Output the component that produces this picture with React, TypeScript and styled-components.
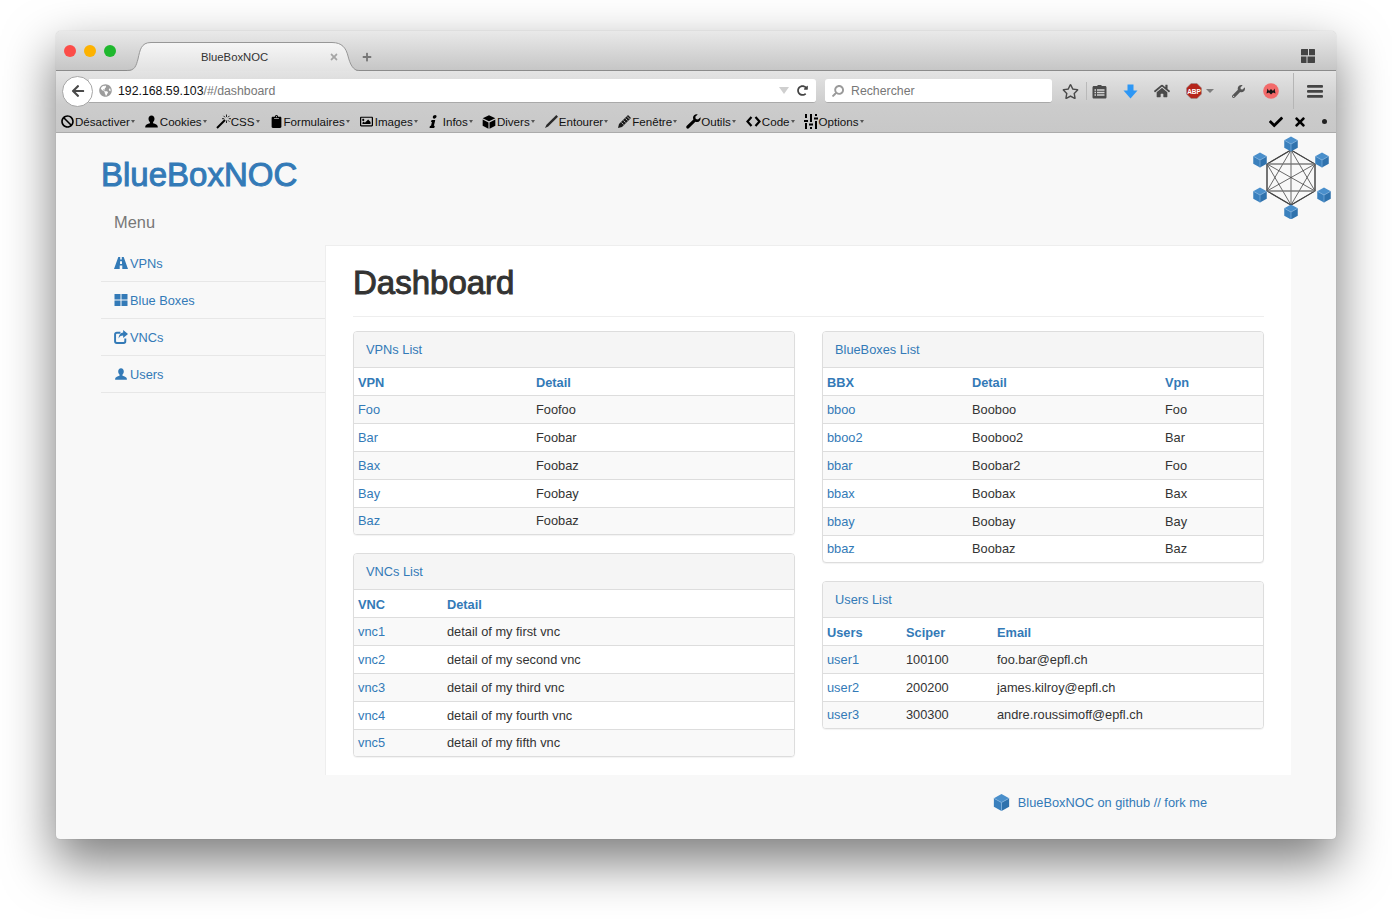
import React from 'react';
import styled, { createGlobalStyle } from 'styled-components';
import {
  FaBan,
  FaClipboard,
  FaHome,
  FaInfo,
  FaRedoAlt,
  FaRegImage,
  FaRegStar,
  FaSearch,
  FaWrench,
  FaArrowLeft,
  FaGlobeAmericas,
  FaCheck,
  FaTimes,
  FaPlus,
} from 'react-icons/fa';

const BLUE = '#337ab7';

const GlobalStyle = createGlobalStyle`
  html, body {
    margin: 0;
    background: #fff;
    overflow: hidden;
  }
  body {
    font-family: "Liberation Sans", Arial, sans-serif;
    color: #333;
  }
`;

const Desktop = styled.div`
  padding: 31px 56px 80px;
  height: 919px;
  box-sizing: border-box;
`;

const Window = styled.div`
  width: 1280px;
  height: 808px;
  border-radius: 5px 5px 4px 4px;
  background: #f8f8f8;
  box-shadow: 0 22px 50px 2px rgba(0, 0, 0, 0.5), 0 0 1px rgba(0, 0, 0, 0.3);
  display: flex;
  flex-direction: column;
`;

const TitleBar = styled.div`
  height: 40px;
  box-sizing: border-box;
  flex: none;
  display: flex;
  align-items: flex-end;
  background: linear-gradient(#e9e9e9, #c6c6c6);
  border-bottom: 1px solid #8b8b8b;
  border-radius: 5px 5px 0 0;
  padding-left: 8px;
  position: relative;
`;

const Lights = styled.div`
  display: flex;
  gap: 8px;
  align-self: flex-start;
  margin-top: 14px;
`;

const Light = styled.span<{ $color: string }>`
  width: 12px;
  height: 12px;
  border-radius: 50%;
  background: ${p => p.$color};
`;

const Tab = styled.div`
  width: 232px;
  height: 29px;
  margin: 0 0 -1px 11px;
  position: relative;
  z-index: 1;
  font-size: 11.3px;
  color: #333;
  display: flex;
  align-items: center;
`;

const TabShape = styled.svg`
  position: absolute;
  inset: 0;
`;

const TabTitle = styled.span`
  position: relative;
  margin-left: 74px;
  width: 128px;
  margin-top: 1px;
`;

const TabClose = styled(FaTimes)`
  position: relative;
  color: #a5a5a5;
  font-size: 10px;
`;

const NewTab = styled(FaPlus)`
  color: #777;
  font-size: 10px;
  margin: 0 0 8px 3px;
`;

const GridIcon = styled.svg`
  margin: 0 21px 7px auto;
`;

const Toolbars = styled.div`
  flex: none;
  background: linear-gradient(#e4e4e4, #cccccc 55%, #c8c8c8);
  border-bottom: 1px solid #ababab;
`;

const NavRow = styled.div`
  height: 40px;
  display: flex;
  align-items: center;
  padding-left: 6px;
`;

const BackButton = styled.div`
  width: 31px;
  height: 31px;
  flex: none;
  border-radius: 50%;
  background: #fff;
  border: 1px solid #a6a6a6;
  box-sizing: border-box;
  display: flex;
  align-items: center;
  justify-content: center;
  color: #4a4a4a;
  font-size: 14px;
  position: relative;
  z-index: 1;
`;

const Field = styled.div<{ $width: number }>`
  height: 24px;
  width: ${p => p.$width}px;
  box-sizing: border-box;
  flex: none;
  background: #fff;
  border-radius: 0 3px 3px 0;
  border-bottom: 1px solid #a9a9a9;
  display: flex;
  align-items: center;
  font-size: 12.3px;
`;

const UrlField = styled(Field)`
  margin-left: -4px;
  padding: 0 8px 0 10px;
`;

const SearchField = styled(Field)`
  margin-left: 9px;
  border-radius: 3px;
  padding-left: 7px;
  color: #777;
`;

const Globe = styled(FaGlobeAmericas)`
  color: #9c9c9c;
  font-size: 13px;
  margin-right: 6px;
`;

const UrlHost = styled.span`
  color: #111;
`;

const UrlPath = styled.span`
  color: #777;
`;

const UrlDrop = styled.span`
  margin-left: auto;
  width: 0;
  height: 0;
  border: 5px solid transparent;
  border-top: 7px solid #cfcfcf;
  border-bottom: 0;
`;

const Reload = styled(FaRedoAlt)`
  color: #444;
  font-size: 11px;
  margin-left: 8px;
`;

const SearchGlass = styled(FaSearch)`
  color: #9a9a9a;
  font-size: 12px;
  margin-right: 7px;
  transform: scaleX(-1);
`;

const NavIcons = styled.div`
  display: flex;
  align-items: center;
  height: 100%;
  color: #4a4a4a;
  flex: 1;
  margin-left: 3px;
`;

const NavSlot = styled.span<{ $width: number; $size?: number; $color?: string }>`
  width: ${p => p.$width}px;
  flex: none;
  display: flex;
  align-items: center;
  justify-content: center;
  font-size: ${p => p.$size || 14}px;
  color: ${p => p.$color || 'inherit'};
`;

const NavSep = styled.span<{ $tall?: boolean }>`
  width: 1px;
  flex: none;
  height: ${p => (p.$tall ? 36 : 18)}px;
  background: ${p => (p.$tall ? '#b5b5b5' : '#b9b9b9')};
`;

const SmallCaret = styled.span`
  width: 0;
  height: 0;
  border: 4px solid transparent;
  border-top: 4px solid #7d7d7d;
  border-bottom: 0;
  margin-left: 4px;
`;

const BookmarkRow = styled.div`
  height: 21px;
  display: flex;
  align-items: center;
  padding-left: 4px;
  gap: 9px;
  font-size: 11.6px;
  color: #111;
`;

const Bookmark = styled.span`
  display: flex;
  align-items: center;
`;

const BookmarkIcon = styled.span<{ $width?: number; $after?: number }>`
  width: ${p => p.$width || 15}px;
  margin-right: ${p => p.$after || 0}px;
  height: 16px;
  display: flex;
  align-items: center;
  justify-content: center;
  color: #000;
  font-size: 13px;
  flex: none;
`;

const SlantedInfo = styled(FaInfo)`
  transform: skewX(-14deg);
`;

const MenuCaret = styled.span`
  width: 0;
  height: 0;
  border: 2.5px solid transparent;
  border-top: 3px solid #555;
  border-bottom: 0;
  margin-left: 1px;
`;

const BookmarkEnd = styled.div`
  margin-left: auto;
  display: flex;
  align-items: center;
  color: #000;
  font-size: 14px;
`;

const EndSlot = styled.span`
  width: 24px;
  display: flex;
  align-items: center;
  justify-content: center;
`;

const TinyDot = styled.span`
  width: 5px;
  height: 5px;
  border-radius: 50%;
  background: #222;
`;

const Content = styled.div`
  flex: 1;
  position: relative;
  padding: 0 45px;
  display: flex;
  flex-direction: column;
`;

const Logo = styled.svg`
  position: absolute;
  right: 5px;
  top: 0;
`;

const Brand = styled.div`
  font-size: 33px;
  line-height: 40px;
  color: ${BLUE};
  padding-top: 22px;
  -webkit-text-stroke: 1px ${BLUE};
`;

const MenuTitle = styled.div`
  font-size: 16.4px;
  line-height: 20px;
  color: #777;
  margin: 17px 0 13px 13px;
`;

const Columns = styled.div`
  display: flex;
`;

const Sidebar = styled.nav`
  width: 224px;
  flex: none;
`;

const SideItem = styled.a`
  height: 37px;
  box-sizing: border-box;
  border-bottom: 1px solid #e7e7e7;
  display: flex;
  align-items: center;
  gap: 2px;
  padding-left: 13px;
  color: ${BLUE};
  font-size: 12.8px;
`;

const Main = styled.main`
  flex: 1;
  background: #fff;
  border-top: 1px solid #eee;
  border-left: 1px solid #eee;
  padding: 19px 27px 18px 27px;
`;

const PageTitle = styled.h1`
  margin: 0 0 14px;
  font-size: 33px;
  line-height: 36px;
  font-weight: 400;
  color: #333;
  -webkit-text-stroke: 1px #333;
  padding-bottom: 15px;
  border-bottom: 1px solid #eee;
`;

const PanelGrid = styled.div`
  display: grid;
  grid-template-columns: 442px 442px;
  column-gap: 27px;
`;

const PanelColumn = styled.div`
  display: flex;
  flex-direction: column;
  gap: 18px;
`;

const Panel = styled.section`
  border: 1px solid #ddd;
  border-radius: 4px;
  box-shadow: 0 1px 1px rgba(0, 0, 0, 0.05);
  overflow: hidden;
  background: #fff;
`;

const PanelHeading = styled.div`
  height: 36px;
  box-sizing: border-box;
  background: #f5f5f5;
  border-bottom: 1px solid #ddd;
  color: ${BLUE};
  font-size: 12.8px;
  line-height: 35px;
  padding-left: 12px;
`;

const Table = styled.table`
  width: 100%;
  table-layout: fixed;
  border-collapse: collapse;
  font-size: 12.8px;
`;

const Col = styled.col<{ $width?: number }>`
  ${p => (p.$width ? `width: ${p.$width}px;` : '')}
`;

const HeadCell = styled.th`
  height: 27px;
  box-sizing: border-box;
  padding: 2px 4px 0;
  text-align: left;
  font-weight: 700;
  color: ${BLUE};
  border-bottom: 1px solid #ddd;
`;

const Row = styled.tr`
  height: 28px;
  &:nth-child(odd) {
    background: #f9f9f9;
  }
  &:last-child {
    height: 27px;
  }
  &:not(:last-child) td {
    border-bottom: 1px solid #ddd;
  }
`;

const Cell = styled.td<{ $link?: boolean }>`
  padding: 0 4px;
  color: ${p => (p.$link ? BLUE : '#333')};
`;

const Footer = styled.footer`
  height: 64px;
  box-sizing: border-box;
  padding: 0 84px 9px 0;
  display: flex;
  align-items: center;
  justify-content: flex-end;
  gap: 8px;
  color: ${BLUE};
  font-size: 12.8px;
`;

const CUBE_TOP = '#4a8fcb';
const CUBE_LEFT = '#3a80bd';
const CUBE_RIGHT = '#2f72ad';

const Cube = ({ x, y, r }: { x: number; y: number; r: number }) => (
  <g transform={`translate(${x} ${y}) scale(${r})`}>
    <path d="M0 -1 L0.9 -0.5 L0 0 L-0.9 -0.5 Z" fill={CUBE_TOP} />
    <path d="M-0.9 -0.5 L0 0 L0 1 L-0.9 0.5 Z" fill={CUBE_LEFT} />
    <path d="M0.9 -0.5 L0 0 L0 1 L0.9 0.5 Z" fill={CUBE_RIGHT} />
    <path d="M-0.9 -0.5 L0 0 L0.9 -0.5 M0 0 V1" stroke="#7fb2de" strokeWidth="0.09" fill="none" />
  </g>
);

const HEX: [number, number][] = [
  [40, 17],
  [64, 31],
  [64, 58],
  [40, 72],
  [16, 58],
  [16, 31],
];

const NetworkLogo = () => (
  <Logo width="80" height="86" viewBox="0 0 80 86">
    <g stroke="#444" strokeWidth="0.8" fill="none">
      {HEX.map((a, i) =>
        HEX.slice(i + 1).map((b, j) => (
          <line key={`${i}-${j}`} x1={a[0]} y1={a[1]} x2={b[0]} y2={b[1]} />
        )),
      )}
      <path d="M40 17 L64 31 V58 L40 72 L16 58 V31 Z" strokeWidth="1.1" />
      <line x1="16" y1="31" x2="64" y2="31" stroke="#888" strokeWidth="1.2" />
      <line x1="16" y1="58" x2="64" y2="58" stroke="#888" strokeWidth="1.2" />
    </g>
    <Cube x={40} y={11} r={7.5} />
    <Cube x={71} y={27} r={7.5} />
    <Cube x={73} y={62} r={7.5} />
    <Cube x={40} y={79} r={7.5} />
    <Cube x={9} y={62} r={7.5} />
    <Cube x={9} y={27} r={7.5} />
  </Logo>
);

const USER_PATH =
  'M8 1c2 0 3.200 1.600 3.200 3.600 0 1.500-.7 2.800-1.500 3.500v1.300c2.500.7 5 1.600 5 3.600v1H1.300v-1c0-2 2.500-2.900 5-3.600V8.100c-.8-.7-1.500-2-1.500-3.500C4.800 2.600 6 1 8 1z';

const UserGlyph = ({ size = 14, color = 'currentColor' }: { size?: number; color?: string }) => (
  <svg width={size} height={size} viewBox="0 0 16 15">
    <path d={USER_PATH} fill={color} />
  </svg>
);

const RoadGlyph = () => (
  <svg width="14" height="14" viewBox="0 0 14 14">
    <path
      d="M4.300 1H6.200V3.600H7.800V1H9.700L14 13H8.300V9.600H5.700V13H0L4.300 1ZM6 5.200V8H8V5.200H6Z"
      fill={BLUE}
      fillRule="evenodd"
    />
  </svg>
);

const BoxesGlyph = () => (
  <svg width="14" height="12" viewBox="0 0 13 12">
    <path d="M0 0H6V5.500H0ZM7 0H13V5.500H7ZM0 6.500H6V12H0ZM7 6.500H13V12H7Z" fill={BLUE} />
  </svg>
);

const ShareGlyph = () => (
  <svg width="14" height="14" viewBox="0 0 13 13">
    <path
      d="M6 2.500H2.600C1.700 2.500 1 3.200 1 4.100V10.400C1 11.300 1.700 12 2.600 12H8.900C9.800 12 10.500 11.300 10.500 10.400V8"
      fill="none"
      stroke={BLUE}
      strokeWidth="1.800"
    />
    <path d="M8.500 0L13 3.700L8.500 7.400V5.200C6.800 5.200 5.300 5.800 4.300 8C4.300 5 6 2.500 8.500 2.300Z" fill={BLUE} />
  </svg>
);

const BoxGlyph = () => (
  <svg width="14" height="14" viewBox="-1.000 -1.050 2 2.100">
    <path d="M0 -1 L0.95 -0.55 L0 -0.1 L-0.95 -0.55 Z" fill="#000" />
    <path d="M-0.95 -0.38 L-0.08 0.06 V1 L-0.95 0.55 Z" fill="#000" />
    <path d="M0.95 -0.38 L0.08 0.06 V1 L0.95 0.55 Z" fill="#000" />
  </svg>
);

const WandGlyph = () => (
  <svg width="15" height="15" viewBox="0 0 15 15">
    <path d="M1 14L9 6" stroke="#000" strokeWidth="2" />
    <path d="M10.500 0.500V3M10.500 6.500V9M6 4.700H8.200M12.800 4.700H15M7.500 1.800L9 3.300M12 6.300L13.500 7.800M13.500 1.800L12 3.300" stroke="#222" strokeWidth="1" />
  </svg>
);

const PencilGlyph = () => (
  <svg width="15" height="15" viewBox="0 0 15 15">
    <path d="M12.300 1L14 2.700L4.200 12.500L1 14L2.500 10.800Z" fill="#2a2a2a" />
  </svg>
);

const HatchedPencilGlyph = () => (
  <svg width="15" height="15" viewBox="0 0 15 15">
    <path d="M11 1L14 4L5 13L1 14L2 10Z" fill="#1c1c1c" />
    <path d="M8.500 4.500L10.500 6.500M6.500 6.500L8.500 8.500M4.500 8.500L6.500 10.500M10 2.500L12.500 5" stroke="#d0d0d0" strokeWidth="0.8" />
  </svg>
);

const SpannerGlyph = () => (
  <svg width="15" height="15" viewBox="0 0 15 15">
    <path d="M14.500 3.200L12 5.500L9.800 4.900L9.300 2.800L11.700 0.500C9.500 -0.200 7.200 1.200 7 3.500C7 4.300 7.100 4.900 7.400 5.500L0.800 11.800C0 12.600 0 13.500 0.700 14.200C1.400 14.900 2.400 14.800 3.100 14.100L9.400 7.700C10 8 10.700 8.100 11.400 8C13.700 7.700 15 5.400 14.500 3.200Z" fill="#000" />
  </svg>
);

const ChevronsGlyph = () => (
  <svg width="15" height="11" viewBox="0 0 15 11">
    <path d="M5.500 1L1.500 5.500L5.500 10M9.500 1L13.500 5.500L9.500 10" fill="none" stroke="#000" strokeWidth="2.200" />
  </svg>
);

const SlidersGlyph = () => (
  <svg width="14" height="15" viewBox="0 0 14 15">
    <path d="M1 0H3V4H1ZM0 6H4V8H0ZM1 9H3V15H1ZM6 0H8V8H6ZM5 9.500H9V11.500H5ZM6 13H8V15H6ZM11 0H13V2H11ZM10 3.500H14V5.500H10ZM11 7H13V15H11Z" fill="#000" />
  </svg>
);

const FooterCube = () => (
  <svg width="17" height="17" viewBox="-1 -1 2 2">
    <Cube x={0} y={0} r={1} />
  </svg>
);

const ListGlyph = () => (
  <svg width="15" height="15" viewBox="0 0 15 15">
    <path
      d="M2 2H5.500V1H9.500V2H13C14 2 14.500 2.600 14.500 3.500V13C14.500 14 14 14.500 13 14.500H2C1 14.500 .5 14 .5 13V3.500C.5 2.600 1 2 2 2ZM2.500 5.300V6.800H4V5.300ZM5 5.300V6.800H12.500V5.300ZM2.500 7.800V9.300H4V7.800ZM5 7.800V9.300H12.500V7.800ZM2.500 10.300V11.800H4V10.300ZM5 10.300V11.800H12.500V10.300Z"
      fill="#4a4a4a"
      fillRule="evenodd"
    />
  </svg>
);

const DownloadGlyph = () => (
  <svg width="15" height="15" viewBox="0 0 15 15">
    <path d="M4.500 0.500H10.500V6.500H14.500L7.500 14.500L0.500 6.500H4.500Z" fill="#2d97f5" />
  </svg>
);

const AbpGlyph = () => (
  <svg width="16" height="16" viewBox="0 0 16 16">
    <path d="M5 0.500H11L15.500 5V11L11 15.500H5L0.500 11V5Z" fill="#b5251b" stroke="#8c8c8c" strokeWidth="0.5" />
    <text x="8" y="10.500" textAnchor="middle" fontSize="6.500" fontWeight="700" fill="#fff" fontFamily="Liberation Sans Narrow, Liberation Sans, sans-serif">
      ABP
    </text>
  </svg>
);

const MaskGlyph = () => (
  <svg width="16" height="16" viewBox="0 0 16 16">
    <circle cx="8" cy="8" r="7.800" fill="#f26a6a" />
    <path d="M3.500 10.500L4.500 5.500L6 8L8 6L10 8L11.500 5.500L12.500 10.500L10 9.500L8 11.500L6 9.500Z" fill="#151515" />
  </svg>
);

const MenuGlyph = () => (
  <svg width="16" height="13" viewBox="0 0 16 13">
    <rect x="0" y="0" width="16" height="2.700" rx="1" fill="#444" />
    <rect x="0" y="5" width="16" height="2.700" rx="1" fill="#444" />
    <rect x="0" y="10" width="16" height="2.700" rx="1" fill="#444" />
  </svg>
);

const bookmarks: { label: string; icon: React.ReactNode; width?: number; after?: number }[] = [
  { label: 'Désactiver', icon: <FaBan /> },
  { label: 'Cookies', icon: <UserGlyph size={15} />, width: 16 },
  { label: 'CSS', icon: <WandGlyph /> },
  { label: 'Formulaires', icon: <FaClipboard /> },
  { label: 'Images', icon: <FaRegImage />, width: 16 },
  { label: 'Infos', icon: <SlantedInfo />, width: 14, after: 2 },
  { label: 'Divers', icon: <BoxGlyph /> },
  { label: 'Entourer', icon: <PencilGlyph /> },
  { label: 'Fenêtre', icon: <HatchedPencilGlyph /> },
  { label: 'Outils', icon: <SpannerGlyph /> },
  { label: 'Code', icon: <ChevronsGlyph />, width: 17 },
  { label: 'Options', icon: <SlidersGlyph /> },
];

const sideItems: { label: string; icon: React.ReactNode }[] = [
  { label: 'VPNs', icon: <RoadGlyph /> },
  { label: 'Blue Boxes', icon: <BoxesGlyph /> },
  { label: 'VNCs', icon: <ShareGlyph /> },
  { label: 'Users', icon: <UserGlyph size={14} color={BLUE} /> },
];

interface ListPanelProps {
  title: string;
  headers: string[];
  widths: number[];
  rows: string[][];
}

const ListPanel: React.FC<ListPanelProps> = ({ title, headers, widths, rows }) => (
  <Panel>
    <PanelHeading>{title}</PanelHeading>
    <Table>
      <colgroup>
        {headers.map((h, i) => (
          <Col key={h} $width={widths[i]} />
        ))}
      </colgroup>
      <thead>
        <tr>
          {headers.map(h => (
            <HeadCell key={h}>{h}</HeadCell>
          ))}
        </tr>
      </thead>
      <tbody>
        {rows.map(row => (
          <Row key={row[0]}>
            {row.map((value, i) => (
              <Cell key={i} $link={i === 0}>
                {value}
              </Cell>
            ))}
          </Row>
        ))}
      </tbody>
    </Table>
  </Panel>
);

const App: React.FC = () => (
  <>
    <GlobalStyle />
    <Desktop>
      <Window>
        <TitleBar>
          <Lights>
            <Light $color="#fc4d49" />
            <Light $color="#fdb201" />
            <Light $color="#1fb82e" />
          </Lights>
          <Tab>
            <TabShape width="232" height="29" viewBox="0 0 232 29">
              <defs>
                <linearGradient id="tabFill" x1="0" y1="0" x2="0" y2="1">
                  <stop offset="0" stopColor="#f6f6f6" />
                  <stop offset="1" stopColor="#e2e2e2" />
                </linearGradient>
              </defs>
              <path
                d="M0 29 C8 29 9 24 11 17 C13 8 14 0.500 24 0.500 L205 0.500 C215 0.500 219 6 221 14 C223 22 226 29 232 29 Z"
                fill="url(#tabFill)"
              />
              <path
                d="M0 28.500 C8 28.500 9 24 11 17 C13 8 14 0.500 24 0.500 L205 0.500 C215 0.500 219 6 221 14 C223 22 226 28.500 232 28.500"
                fill="none"
                stroke="#979797"
              />
            </TabShape>
            <TabTitle>BlueBoxNOC</TabTitle>
            <TabClose />
          </Tab>
          <NewTab />
          <GridIcon width="14" height="14" viewBox="0 0 14 14">
            <path d="M0.500 0H7V6.300H0V0.500ZM8 0H13.500L14 0.500V6.300H8ZM0 7.500H5.500V14H0.500L0 13.500ZM6.500 7.500H14V13.500L13.500 14H6.500Z" fill="#444" />
          </GridIcon>
        </TitleBar>
        <Toolbars>
          <NavRow>
            <BackButton>
              <FaArrowLeft />
            </BackButton>
            <UrlField $width={727}>
              <Globe />
              <UrlHost>192.168.59.103</UrlHost>
              <UrlPath>/#/dashboard</UrlPath>
              <UrlDrop />
              <Reload />
            </UrlField>
            <SearchField $width={227}>
              <SearchGlass />
              Rechercher
            </SearchField>
            <NavIcons>
              <NavSlot $width={31} $size={17}>
                <FaRegStar />
              </NavSlot>
              <NavSep />
              <NavSlot $width={24}>
                <ListGlyph />
              </NavSlot>
              <NavSlot $width={38}>
                <DownloadGlyph />
              </NavSlot>
              <NavSlot $width={26} $size={16}>
                <FaHome />
              </NavSlot>
              <NavSlot $width={50}>
                <AbpGlyph />
                <SmallCaret />
              </NavSlot>
              <NavSlot $width={26} $size={13} $color="#555">
                <FaWrench />
              </NavSlot>
              <NavSlot $width={40}>
                <MaskGlyph />
              </NavSlot>
              <NavSlot $width={2} />
              <NavSep $tall />
              <NavSlot $width={42}>
                <MenuGlyph />
              </NavSlot>
            </NavIcons>
          </NavRow>
          <BookmarkRow>
            {bookmarks.map(b => (
              <Bookmark key={b.label}>
                <BookmarkIcon $width={b.width} $after={b.after}>
                  {b.icon}
                </BookmarkIcon>
                {b.label}
                <MenuCaret />
              </Bookmark>
            ))}
            <BookmarkEnd>
              <EndSlot>
                <FaCheck />
              </EndSlot>
              <EndSlot>
                <FaTimes />
              </EndSlot>
              <EndSlot>
                <TinyDot />
              </EndSlot>
            </BookmarkEnd>
          </BookmarkRow>
        </Toolbars>
        <Content>
          <NetworkLogo />
          <Brand>BlueBoxNOC</Brand>
          <MenuTitle>Menu</MenuTitle>
          <Columns>
            <Sidebar>
              {sideItems.map(item => (
                <SideItem key={item.label}>
                  {item.icon}
                  {item.label}
                </SideItem>
              ))}
            </Sidebar>
            <Main>
              <PageTitle>Dashboard</PageTitle>
              <PanelGrid>
                <PanelColumn>
                  <ListPanel
                    title="VPNs List"
                    headers={['VPN', 'Detail']}
                    widths={[178]}
                    rows={[
                      ['Foo', 'Foofoo'],
                      ['Bar', 'Foobar'],
                      ['Bax', 'Foobaz'],
                      ['Bay', 'Foobay'],
                      ['Baz', 'Foobaz'],
                    ]}
                  />
                  <ListPanel
                    title="VNCs List"
                    headers={['VNC', 'Detail']}
                    widths={[89]}
                    rows={[
                      ['vnc1', 'detail of my first vnc'],
                      ['vnc2', 'detail of my second vnc'],
                      ['vnc3', 'detail of my third vnc'],
                      ['vnc4', 'detail of my fourth vnc'],
                      ['vnc5', 'detail of my fifth vnc'],
                    ]}
                  />
                </PanelColumn>
                <PanelColumn>
                  <ListPanel
                    title="BlueBoxes List"
                    headers={['BBX', 'Detail', 'Vpn']}
                    widths={[145, 193]}
                    rows={[
                      ['bboo', 'Booboo', 'Foo'],
                      ['bboo2', 'Booboo2', 'Bar'],
                      ['bbar', 'Boobar2', 'Foo'],
                      ['bbax', 'Boobax', 'Bax'],
                      ['bbay', 'Boobay', 'Bay'],
                      ['bbaz', 'Boobaz', 'Baz'],
                    ]}
                  />
                  <ListPanel
                    title="Users List"
                    headers={['Users', 'Sciper', 'Email']}
                    widths={[79, 91]}
                    rows={[
                      ['user1', '100100', 'foo.bar@epfl.ch'],
                      ['user2', '200200', 'james.kilroy@epfl.ch'],
                      ['user3', '300300', 'andre.roussimoff@epfl.ch'],
                    ]}
                  />
                </PanelColumn>
              </PanelGrid>
            </Main>
          </Columns>
          <Footer>
            <FooterCube />
            BlueBoxNOC on github // fork me
          </Footer>
        </Content>
      </Window>
    </Desktop>
  </>
);

export default App;
